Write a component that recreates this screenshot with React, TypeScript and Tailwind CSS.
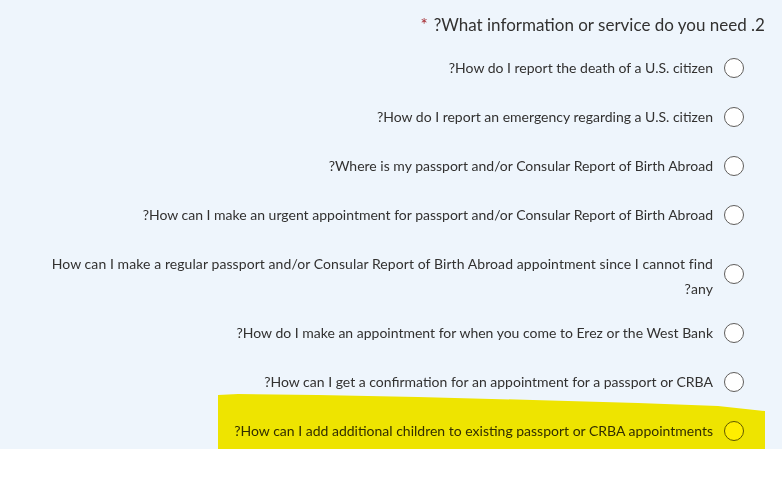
import React from 'react';

const options = [
  '?How do I report the death of a U.S. citizen',
  '?How do I report an emergency regarding a U.S. citizen',
  '?Where is my passport and/or Consular Report of Birth Abroad',
  '?How can I make an urgent appointment for passport and/or Consular Report of Birth Abroad',
];

const laterOptions = [
  '?How do I make an appointment for when you come to Erez or the West Bank',
  '?How can I get a confirmation for an appointment for a passport or CRBA',
];

function Radio() {
  return <span className="w-5 h-5 shrink-0 rounded-full border border-[#605e5c] bg-white" />;
}

function OptionRow({ label }: { label: string }) {
  return (
    <div className="h-[49px] flex items-center justify-end gap-[11px] pr-[38px]">
      <span className="text-[14px] leading-5 text-[#323130] text-right">{label}</span>
      <Radio />
    </div>
  );
}

export default function App() {
  return (
    <div className="w-[782px] h-[477px] bg-white font-['Lato','Noto_Sans',sans-serif]">
      <div className="relative h-[449px] bg-[#eef5fc]">
        <div className="pt-[13px] pr-[17px] flex justify-end">
          <h2 className="text-[17px] leading-6 text-[#323130]">
            <span className="text-[#a4262c] mr-[6px]">*</span>?What information or service do you need .2
          </h2>
        </div>

        <div className="mt-[6px]">
          {options.map((o) => (
            <OptionRow key={o} label={o} />
          ))}

          <div className="h-[69px] flex items-center justify-end gap-[11px] pr-[38px]">
            <div className="pt-[4px] text-[14px] leading-[25px] tracking-[0.08px] text-[#323130] text-right">
              <div>How can I make a regular passport and/or Consular Report of Birth Abroad appointment since I cannot find</div>
              <div>?any</div>
            </div>
            <Radio />
          </div>

          {laterOptions.map((o) => (
            <OptionRow key={o} label={o} />
          ))}

          <div className="h-[49px] flex items-center justify-end gap-[11px] pr-[38px]">
            <span className="text-[14px] leading-5 text-[#323130] text-right">
              ?How can I add additional children to existing passport or CRBA appointments
            </span>
            <Radio />
          </div>
        </div>

        {/* marker highlight over the last answer */}
        <svg
          className="absolute left-[218px] top-[394px] mix-blend-multiply pointer-events-none"
          width="547"
          height="55"
          viewBox="0 0 547 55"
        >
          <path d="M0 1 L20 0 L100 1 L200 3 L315 6 L420 9 L500 12 L547 17 L547 55 L0 55 Z" fill="#ffee00" />
        </svg>
      </div>
    </div>
  );
}
